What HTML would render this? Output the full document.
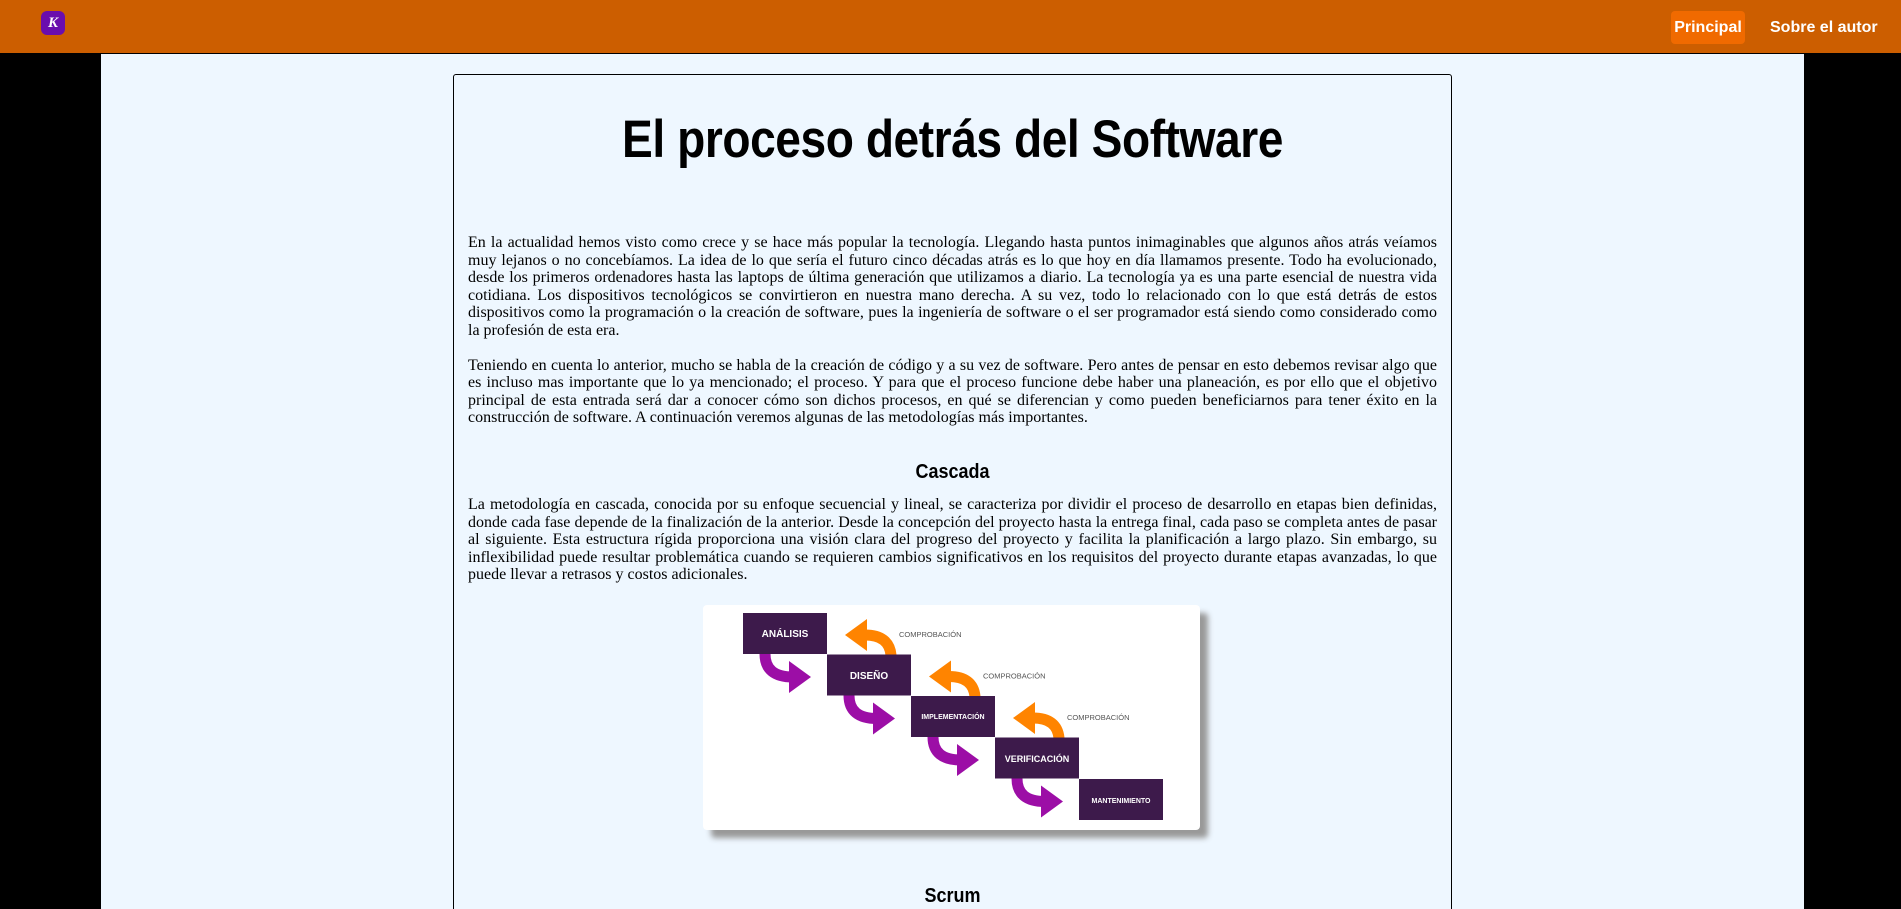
<!DOCTYPE html>
<html><head><meta charset="utf-8"><style>
*{margin:0;padding:0;box-sizing:border-box}
html,body{width:1901px;height:909px;overflow:hidden;background:#000}
header{position:absolute;left:0;top:0;width:1901px;height:54px;background:#cc5e00;border-bottom:1px solid #000}
.logo{position:absolute;left:41px;top:11px;width:24px;height:24px;border-radius:6px;background:#6a0dad;color:#fff;font:italic bold 15px "Liberation Serif",serif;text-align:center;line-height:24px}
.nav{position:absolute;top:11px;height:33px;font:bold 16px "Liberation Sans",sans-serif;color:#fff;line-height:33px}
.p1{left:1671px;width:74px;background:#f06a00;border-radius:4px;text-align:center}
.p2{left:1770px}
main{position:absolute;left:101px;top:54px;width:1703px;height:855px;background:#eef7ff;overflow:hidden}
.card{position:absolute;left:352px;top:20px;width:999px;height:840px;border:1px solid #000;border-radius:3px;padding:0 14px;overflow:hidden}
h1{font:bold 53px "Liberation Sans",sans-serif;text-align:center;margin-top:34px;height:60px;transform:scaleX(0.87);letter-spacing:-0.5px}
p{font:16px/17.6px "Liberation Serif",serif;text-align:justify;color:#000;margin-bottom:17px}
h2{font:bold 20px "Liberation Sans",sans-serif;text-align:center;margin:34px 0 12px;transform:scaleX(.9)}
.img{position:relative;left:235px;width:497px;height:225px;background:#fff;border-radius:4px;box-shadow:8px 8px 6px #999;margin:-2px 0 55px}
</style></head><body>
<header><div class="logo">K</div><div class="nav p1">Principal</div><div class="nav p2">Sobre el autor</div></header>
<main><div class="card">
<h1>El proceso detrás del Software</h1>
<p style="margin-top:65px">En la actualidad hemos visto como crece y se hace más popular la tecnología. Llegando hasta puntos inimaginables que algunos años atrás veíamos muy lejanos o no concebíamos. La idea de lo que sería el futuro cinco décadas atrás es lo que hoy en día llamamos presente. Todo ha evolucionado, desde los primeros ordenadores hasta las laptops de última generación que utilizamos a diario. La tecnología ya es una parte esencial de nuestra vida cotidiana. Los dispositivos tecnológicos se convirtieron en nuestra mano derecha. A su vez, todo lo relacionado con lo que está detrás de estos dispositivos como la programación o la creación de software, pues la ingeniería de software o el ser programador está siendo como considerado como la profesión de esta era.</p>
<p>Teniendo en cuenta lo anterior, mucho se habla de la creación de código y a su vez de software. Pero antes de pensar en esto debemos revisar algo que es incluso mas importante que lo ya mencionado; el proceso. Y para que el proceso funcione debe haber una planeación, es por ello que el objetivo principal de esta entrada será dar a conocer cómo son dichos procesos, en qué se diferencian y como pueden beneficiarnos para tener éxito en la construcción de software. A continuación veremos algunas de las metodologías más importantes.</p>
<h2>Cascada</h2>
<p style="margin-bottom:23px">La metodología en cascada, conocida por su enfoque secuencial y lineal, se caracteriza por dividir el proceso de desarrollo en etapas bien definidas, donde cada fase depende de la finalización de la anterior. Desde la concepción del proyecto hasta la entrega final, cada paso se completa antes de pasar al siguiente. Esta estructura rígida proporciona una visión clara del progreso del proyecto y facilita la planificación a largo plazo. Sin embargo, su inflexibilidad puede resultar problemática cuando se requieren cambios significativos en los requisitos del proyecto durante etapas avanzadas, lo que puede llevar a retrasos y costos adicionales.</p>
<div class="img"><svg width="497" height="225" viewBox="0 0 497 225" font-family="Liberation Sans,sans-serif">
<g id="pa"><path d="M62 49 Q62 72 90 72" fill="none" stroke="#9c0ea6" stroke-width="11"/><path d="M86 56 L108 72 L86 88Z" fill="#9c0ea6"/></g>
<use href="#pa" transform="translate(84,41.5)"/><use href="#pa" transform="translate(168,83)"/><use href="#pa" transform="translate(252,124.5)"/>
<g id="oa"><path d="M188 50 Q186 30 162 30" fill="none" stroke="#ff8400" stroke-width="11"/><path d="M164 14 L142 30 L164 46Z" fill="#ff8400"/><text x="196" y="32" font-size="7.5" fill="#555">COMPROBACIÓN</text></g>
<use href="#oa" transform="translate(84,41.5)"/><use href="#oa" transform="translate(168,83)"/>
<g fill="#3d1a4b">
<rect x="40" y="8" width="84" height="41"/><rect x="124" y="49.5" width="84" height="41"/><rect x="208" y="91" width="84" height="41"/><rect x="292" y="132.5" width="84" height="41"/><rect x="376" y="174" width="84" height="41"/></g>
<g fill="#fff" font-weight="bold" text-anchor="middle">
<text x="82" y="32" font-size="10">ANÁLISIS</text><text x="166" y="74" font-size="10">DISEÑO</text><text x="250" y="114" font-size="7">IMPLEMENTACIÓN</text><text x="334" y="157" font-size="9">VERIFICACIÓN</text><text x="418" y="198" font-size="7">MANTENIMIENTO</text></g>
</svg></div>
<h2>Scrum</h2>
</div></main>
</body></html>
